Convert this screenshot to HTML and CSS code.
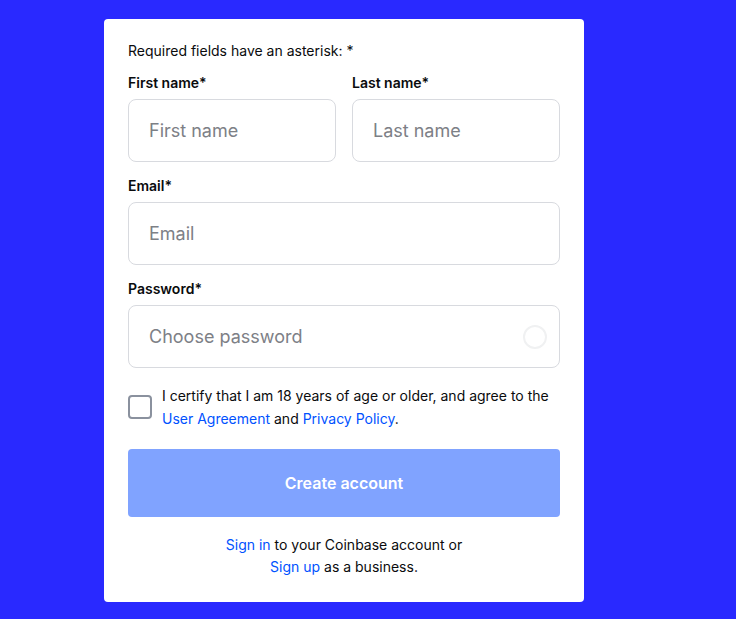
FILE: index.html
```html
<!DOCTYPE html>
<html lang="en">
<head>
<meta charset="utf-8">
<title>Create account</title>
<link rel="stylesheet" href="styles.css">
</head>
<body>
<main class="page">
  <form class="card">
    <p class="note">Required fields have an asterisk: *</p>
    <div class="row">
      <label class="field">
        <span class="label">First name*</span>
        <span class="input"><span class="ph">First name</span></span>
      </label>
      <label class="field">
        <span class="label">Last name*</span>
        <span class="input"><span class="ph">Last name</span></span>
      </label>
    </div>
    <label class="field">
      <span class="label">Email*</span>
      <span class="input"><span class="ph">Email</span></span>
    </label>
    <label class="field">
      <span class="label">Password*</span>
      <span class="input"><span class="ph">Choose password</span><span class="ring"></span></span>
    </label>
    <div class="agree">
      <span class="box"></span>
      <p class="agree-text">I certify that I am 18 years of age or older, and agree to the <a href="#">User Agreement</a> and <a href="#">Privacy Policy</a>.</p>
    </div>
    <button type="button" class="btn">Create account</button>
    <p class="foot"><a href="#">Sign in</a> to your Coinbase account or<br><a href="#">Sign up</a> as a business.</p>
  </form>
</main>
</body>
</html>
```
FILE: styles.css
```css
* { box-sizing: border-box; }
html, body { margin: 0; padding: 0; }
body {
  background: #2929ff;
  font-family: Inter, "Noto Sans", sans-serif;
  color: #0a0b0d;
  width: 736px;
  height: 619px;
  overflow: hidden;
}
.page {
  padding: 19px 0 0 104px;
}
.card {
  width: 480px;
  background: #fff;
  border-radius: 4px;
  padding: 24px 24px 24px;
  display: flex;
  flex-direction: column;
}
.note {
  margin: 0;
  font-size: 14px;
  line-height: 16px;
}
.row {
  display: flex;
  gap: 16px;
}
.row .field { flex: 1; }
.field {
  display: flex;
  flex-direction: column;
  margin-top: 16px;
}
.label {
  font-size: 14px;
  font-weight: 600;
  line-height: 16px;
  margin-bottom: 8px;
}
.input {
  height: 63px;
  border: 1px solid #d8dadf;
  border-radius: 8px;
  display: flex;
  align-items: center;
  padding: 0 12px 0 20px;
  justify-content: space-between;
}
.ph {
  font-size: 18px;
  color: #7d8086;
}
.ring {
  width: 24px;
  height: 24px;
  border: 2px solid #f0f1f2;
  border-radius: 50%;
}
.agree {
  display: flex;
  align-items: center;
  gap: 10px;
  margin-top: 16px;
}
.box {
  flex: none;
  width: 24px;
  height: 24px;
  border: 2px solid #8a919e;
  border-radius: 4px;
}
.agree-text {
  margin: 0;
  font-size: 14px;
  line-height: 23px;
}
a { color: #0052ff; text-decoration: none; }
.btn {
  margin-top: 19px;
  height: 68px;
  border: 0;
  border-radius: 4px;
  background: #80a3ff;
  color: #fff;
  font-family: inherit;
  font-size: 16px;
  font-weight: 600;
}
.foot {
  margin: 17px 0 0;
  text-align: center;
  font-size: 14px;
  line-height: 22px;
}
```
